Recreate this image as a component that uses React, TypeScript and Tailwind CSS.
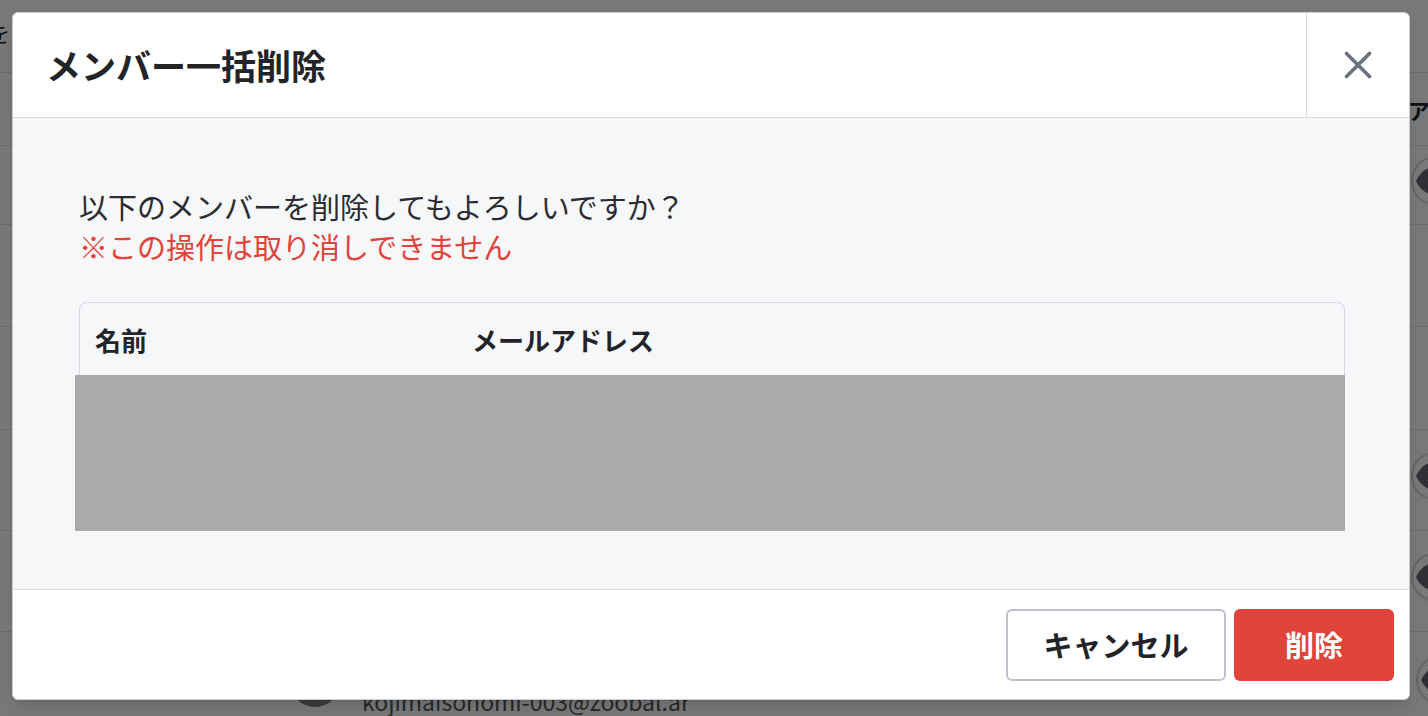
const rows = [
  { h: "h-[79px]", eye: true },
  { h: "h-[102px]", eye: false },
  { h: "h-[103px]", eye: false },
  { h: "h-[101px]", eye: true },
  { h: "h-[101px]", eye: true },
];

function EyeButton() {
  return (
    <div className="flex h-[50px] w-[50px] shrink-0 items-center justify-center rounded-full border-2 border-[#d4d6dc] bg-white">
      <svg width="42" height="30" viewBox="0 0 42 30">
        <path d="M1 15C6 5 13 1 21 1s15 4 20 14c-5 10-12 14-20 14S6 25 1 15z" fill="#62666f" />
        <circle cx="21" cy="15" r="6" fill="#cfd1d6" />
      </svg>
    </div>
  );
}

export default function App() {
  return (
    <div className="relative h-[716px] w-[1428px] overflow-hidden bg-white font-['Noto_Sans_CJK_JP','Noto_Sans',sans-serif] text-[#222428]">
      {/* page behind the dialog */}
      <div className="flex flex-col">
        <div className="flex h-[73px] items-center border-b border-[#e2e2e8] pb-[8px]">
          <span className="-ml-[12px] text-[22px]">を：</span>
        </div>
        <div className="flex h-[73px] items-center border-b border-[#e2e2e8]">
          <div className="w-[1408px] shrink-0" />
          <span className="shrink-0 text-[22px] font-bold">アクション</span>
        </div>
        {rows.map((r, i) => (
          <div key={i} className={`flex ${r.h} items-center border-b border-[#e2e2e8] pb-[8px]`}>
            <div className="w-[1411px] shrink-0" />
            {r.eye && <EyeButton />}
          </div>
        ))}
        <div className="flex h-[101px] items-start pt-[25px]">
          <div className="ml-[290px] h-[50px] w-[50px] shrink-0 rounded-full bg-[#7d7f84]" />
          <div className="ml-[22px] pt-[29px] text-[23px] leading-[30px] text-[#555]">
            kojimaisonomi-003@zoobal.ar
          </div>
          <div className="ml-auto mr-[-38px] mt-[-2px]">
            <EyeButton />
          </div>
        </div>
      </div>

      {/* backdrop */}
      <div className="absolute inset-0 bg-black/[0.53]" />

      {/* dialog */}
      <div className="absolute left-[12px] top-[12px] flex h-[688px] w-[1398px] flex-col overflow-hidden rounded-[6px] border border-[#c9ccd3] bg-white shadow-lg">
        <div className="flex h-[105px] shrink-0 border-b border-[#d5d9e2]">
          <h2 className="flex flex-1 items-center pl-[33px] text-[35px] font-bold leading-[40px] text-[#222428]">
            メンバー一括削除
          </h2>
          <button className="flex w-[103px] items-center justify-center border-l border-[#d5d9e2]">
            <svg width="28" height="28" viewBox="0 0 28 28" fill="none">
              <path
                d="M2.5 2.5L25.5 25.5M25.5 2.5L2.5 25.5"
                stroke="#6a707c"
                strokeWidth="3.6"
                strokeLinecap="round"
              />
            </svg>
          </button>
        </div>

        <div className="flex h-[472px] shrink-0 flex-col border-b border-[#d5d9e2] bg-[#f6f7f9] pl-[66px] pr-[64px] pt-[68px]">
          <p className="text-[29px] leading-[40px] text-[#2a2c31]">
            以下のメンバーを削除してもよろしいですか？
          </p>
          <p className="text-[29px] leading-[40px] text-[#e0443b]">※この操作は取り消しできません</p>

          <div className="mt-[36px] rounded-t-[8px] border border-b-0 border-[#d5d9e2]">
            <div className="flex h-[72px] items-center pl-[15px] text-[26px] font-bold text-[#222428]">
              <span className="w-[377px]">名前</span>
              <span>メールアドレス</span>
            </div>
            <div className="ml-[-5px] mr-[-1px] h-[156px] bg-[#aaaaaa]" />
          </div>
        </div>

        <div className="flex flex-1 items-center justify-end gap-[8px] pr-[15px]">
          <button className="flex h-[72px] w-[220px] items-center justify-center rounded-[6px] border-2 border-[#bcc2cd] bg-white text-[29px] font-bold text-[#222428]">
            キャンセル
          </button>
          <button className="flex h-[72px] w-[160px] items-center justify-center rounded-[6px] bg-[#e0443b] text-[29px] font-bold text-white">
            削除
          </button>
        </div>
      </div>
    </div>
  );
}
